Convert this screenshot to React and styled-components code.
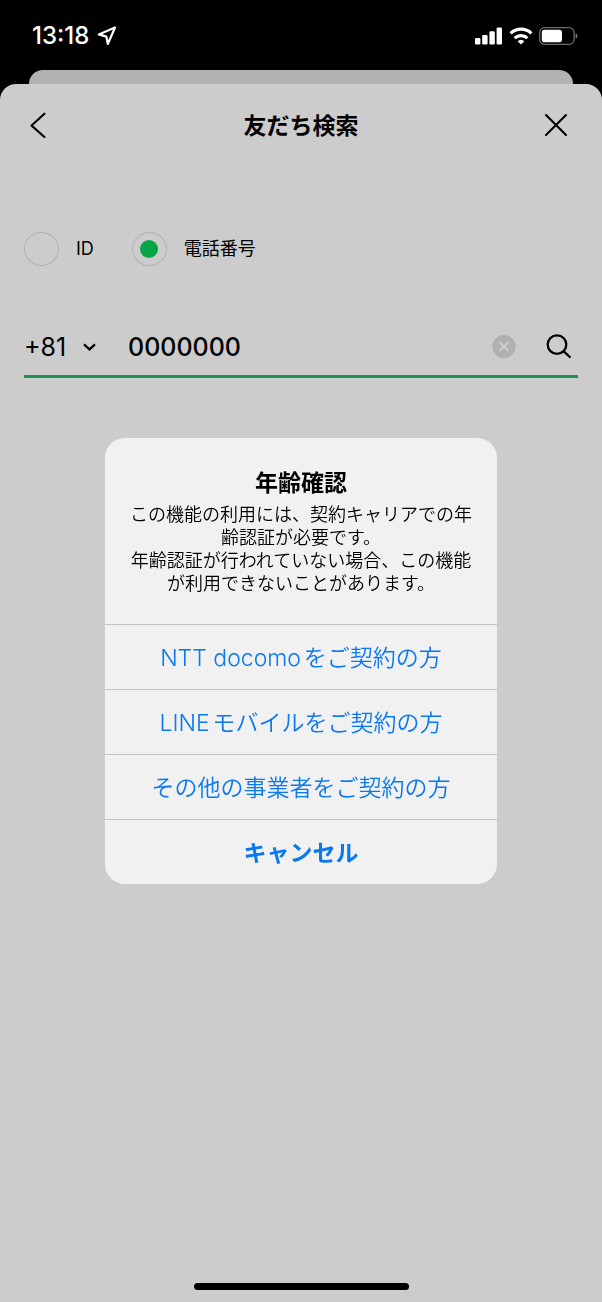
import React, { useState } from 'react';
import styled, { createGlobalStyle } from 'styled-components';

const GlobalStyle = createGlobalStyle`
    * {
        box-sizing: border-box;
    }
    body {
        margin: 0;
        background: #000;
        color: #000;
    }
    body, button, input, select {
        font-family: Inter, "Noto Sans CJK JP", sans-serif;
    }
    button {
        padding: 0;
        border: none;
        background: none;
        color: inherit;
        cursor: pointer;
    }
    svg {
        display: block;
    }
`

const Screen = styled.div`
    min-height: 100vh;
    display: flex;
    flex-direction: column;
`

const StatusBar = styled.header`
    height: 70px;
    padding: 2px 24px 0 32px;
    display: flex;
    align-items: center;
    justify-content: space-between;
    color: #fff;
`

const StatusGroup = styled.div`
    display: flex;
    align-items: center;
    gap: ${(p) => p.$gap}px;
`

const Time = styled.span`
    font-size: 24px;
    font-weight: 500;
    line-height: 28px;
`

const BackSheet = styled.div`
    height: 14px;
    margin: 0 29px;
    border-radius: 14px 14px 0 0;
    background: #b2b2b2;
`

const Sheet = styled.main`
    flex: 1;
    display: flex;
    flex-direction: column;
    border-radius: 16px 16px 0 0;
    background: #ccc;
`

const TitleBar = styled.div`
    height: 82px;
    padding: 0 20px;
    display: grid;
    grid-template-columns: 1fr auto 1fr;
    align-items: center;
`

const IconButton = styled.button`
    width: ${(p) => p.$width}px;
    height: 44px;
    display: flex;
    align-items: center;
    justify-content: center;
    justify-self: ${(p) => p.$side || 'start'};
`

const Title = styled.h1`
    margin: 0;
    padding-top: 2px;
    font-size: 23px;
    font-weight: 600;
    line-height: 30px;
`

const Form = styled.form`
    flex: 1;
    padding: 66px 24px 0;
`

const Radios = styled.div`
    display: flex;
    gap: 38px;
    margin-bottom: 52px;
`

const RadioLabel = styled.label`
    display: flex;
    align-items: center;
    gap: 17px;
    font-size: 18px;
    line-height: 24px;
`

const Radio = styled.input`
    appearance: none;
    width: 35px;
    height: 34px;
    margin: 0;
    display: grid;
    place-items: center;
    border: 1px solid #b0b0b0;
    border-radius: 50%;

    &:checked::before {
        content: '';
        width: 18px;
        height: 18px;
        border-radius: 50%;
        background: #07a446;
    }
`

const SearchRow = styled.div`
    height: 60px;
    display: flex;
    align-items: center;
    border-bottom: 3px solid #20934f;
`

const Country = styled.div`
    display: grid;
    align-items: center;
    margin-right: 32px;

    svg {
        grid-area: 1 / 1;
        justify-self: end;
        pointer-events: none;
    }
`

const CountrySelect = styled.select`
    appearance: none;
    grid-area: 1 / 1;
    width: 72px;
    padding: 0;
    border: none;
    outline: none;
    background: none;
    color: #000;
    font-size: 25px;
    line-height: 32px;
`

const PhoneInput = styled.input`
    flex: 1;
    min-width: 0;
    padding: 0;
    border: none;
    outline: none;
    background: none;
    color: #000;
    font-size: 25px;
    font-weight: 500;
    line-height: 32px;
`

const ClearButton = styled(IconButton)`
    margin-right: 24px;
`

const HomeIndicator = styled.div`
    width: 215px;
    height: 7px;
    margin: 0 auto 12px;
    border-radius: 4px;
    background: #000;
`

const Overlay = styled.div`
    position: fixed;
    inset: 0;
    padding-top: 20px;
    display: flex;
    align-items: center;
    justify-content: center;
`

const Alert = styled.div`
    width: 392px;
    border-radius: 20px;
    overflow: hidden;
    background: #f1f1f1;
    text-align: center;
`

const AlertText = styled.div`
    padding: 30px 24px 29px;
`

const AlertTitle = styled.h2`
    margin: 0 0 5px;
    font-size: 23px;
    font-weight: 600;
    line-height: 30px;
`

const Message = styled.p`
    margin: 0;
    font-size: 18px;
    font-weight: 350;
    line-height: 23px;
`

const AlertButton = styled.button`
    width: 100%;
    height: 65px;
    padding-bottom: 3px;
    display: block;
    border-top: 1px solid #c2c2c2;
    color: #0a78f0;
    font-size: 23px;
    font-weight: ${(p) => (p.$bold ? 600 : 350)};
    text-autospace: normal;
`

const LocationIcon = () => (
    <svg width="20" height="20" viewBox="0 0 20 20" fill="none" stroke="currentColor" strokeWidth="2.2" strokeLinejoin="round">
        <path d="M18 1.6 1.8 8.4 9.4 10.6 10.8 18Z" />
    </svg>
)

const SignalIcon = () => (
    <svg width="28" height="18" viewBox="0 0 28 18" fill="currentColor">
        <rect x="0" y="11" width="5.4" height="6.6" rx="1.3" />
        <rect x="7.2" y="8" width="5.4" height="9.6" rx="1.3" />
        <rect x="14.4" y="4.2" width="5.4" height="13.4" rx="1.3" />
        <rect x="21.6" y="0.5" width="5.4" height="17.1" rx="1.3" />
    </svg>
)

const WifiIcon = () => (
    <svg width="24" height="18" viewBox="0 0 24 18" fill="none" stroke="currentColor" strokeWidth="3.2">
        <path d="M1.6 6.4a15 15 0 0 1 20.8 0" />
        <path d="M5.6 11.2a9.2 9.2 0 0 1 12.8 0" />
        <path d="M12 17.6 8.6 14.3a5 5 0 0 1 6.8 0Z" fill="currentColor" stroke="none" />
    </svg>
)

const BatteryIcon = () => (
    <svg width="39" height="18" viewBox="0 0 39 18">
        <rect x="0.7" y="0.7" width="34.4" height="16.6" rx="5" fill="none" stroke="#6d6d6d" strokeWidth="1.3" />
        <rect x="2.8" y="2.8" width="20.2" height="12.4" rx="2.8" fill="#fff" />
        <path d="M36.6 6.2c2.3.9 2.3 4.7 0 5.6Z" fill="#7d7d7d" />
    </svg>
)

const BackIcon = () => (
    <svg width="16" height="26" viewBox="0 0 16 26" fill="none" stroke="currentColor" strokeWidth="2.1" strokeLinecap="round" strokeLinejoin="round">
        <path d="M14.4 1.7 1.6 13.6 14.4 25" />
    </svg>
)

const CloseIcon = () => (
    <svg width="24" height="24" viewBox="0 0 24 24" stroke="currentColor" strokeWidth="2.1" strokeLinecap="round">
        <path d="M2 2 22 22M22 2 2 22" />
    </svg>
)

const DownIcon = () => (
    <svg width="13" height="8" viewBox="0 0 13 8" fill="none" stroke="currentColor" strokeWidth="2.2">
        <path d="M1 1.4 6.5 6.4 12 1.4" />
    </svg>
)

const ClearIcon = () => (
    <svg width="24" height="24" viewBox="0 0 24 24">
        <circle cx="12" cy="11.6" r="11.6" fill="#b0b0b0" />
        <path d="M7.6 7.2 16.4 16M16.4 7.2 7.6 16" stroke="#d0d0d0" strokeWidth="1.8" />
    </svg>
)

const SearchIcon = () => (
    <svg width="26" height="26" viewBox="0 0 26 26" fill="none" stroke="currentColor" strokeWidth="2.3" strokeLinecap="round">
        <circle cx="11" cy="10.6" r="9.3" />
        <path d="M17.8 17.4 23.8 23" />
    </svg>
)

const App = () => {
    const [type, setType] = useState('phone')
    const [phone, setPhone] = useState('0000000')

    return (
        <>
            <GlobalStyle />
            <Screen lang="ja">
                <StatusBar>
                    <StatusGroup $gap={8}>
                        <Time>13:18</Time>
                        <LocationIcon />
                    </StatusGroup>
                    <StatusGroup $gap={6}>
                        <SignalIcon />
                        <WifiIcon />
                        <BatteryIcon />
                    </StatusGroup>
                </StatusBar>
                <BackSheet />
                <Sheet>
                    <TitleBar>
                        <IconButton $width={36} aria-label="戻る"><BackIcon /></IconButton>
                        <Title>友だち検索</Title>
                        <IconButton $width={52} $side="end" aria-label="閉じる"><CloseIcon /></IconButton>
                    </TitleBar>
                    <Form onSubmit={(e) => e.preventDefault()}>
                        <Radios>
                            <RadioLabel>
                                <Radio type="radio" name="type" checked={type === 'id'} onChange={() => setType('id')} />
                                ID
                            </RadioLabel>
                            <RadioLabel>
                                <Radio type="radio" name="type" checked={type === 'phone'} onChange={() => setType('phone')} />
                                電話番号
                            </RadioLabel>
                        </Radios>
                        <SearchRow>
                            <Country>
                                <CountrySelect aria-label="国番号" defaultValue="81">
                                    <option value="81">+81</option>
                                </CountrySelect>
                                <DownIcon />
                            </Country>
                            <PhoneInput type="tel" aria-label="電話番号" value={phone} onChange={(e) => setPhone(e.target.value)} />
                            <ClearButton type="button" $width={24} aria-label="クリア" onClick={() => setPhone('')}>
                                <ClearIcon />
                            </ClearButton>
                            <IconButton type="submit" $width={38} aria-label="検索"><SearchIcon /></IconButton>
                        </SearchRow>
                    </Form>
                    <HomeIndicator />
                </Sheet>
            </Screen>
            <Overlay lang="ja">
                <Alert role="alertdialog" aria-labelledby="alert-title" aria-describedby="alert-message">
                    <AlertText>
                        <AlertTitle id="alert-title">年齢確認</AlertTitle>
                        <Message id="alert-message">
                            この機能の利用には、契約キャリアでの年齢認証が必要です。<br />
                            年齢認証が行われていない場合、この機能が利用できないことがあります。
                        </Message>
                    </AlertText>
                    <AlertButton>NTT docomoをご契約の方</AlertButton>
                    <AlertButton>LINEモバイルをご契約の方</AlertButton>
                    <AlertButton>その他の事業者をご契約の方</AlertButton>
                    <AlertButton $bold>キャンセル</AlertButton>
                </Alert>
            </Overlay>
        </>
    )
}

export default App;
